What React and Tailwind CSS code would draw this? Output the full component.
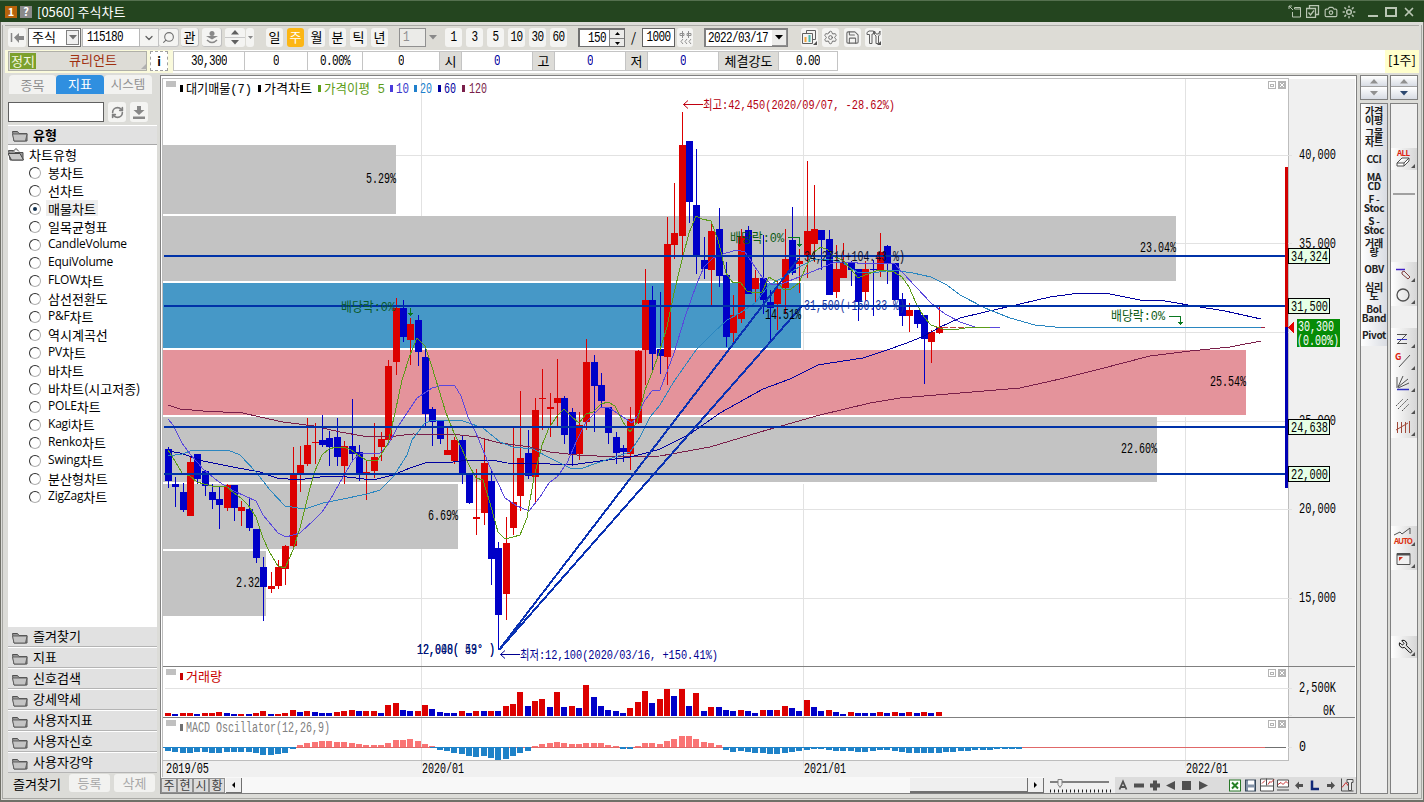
import React from 'react';
import { Search, RefreshCw, Settings, Save, Camera, Wrench, Sun, ChevronDown, X } from 'lucide-react';

const RED = '#dc0000';
const BLUE = '#0000c8';
const STEP = 7.34;

// high, body top, body bottom, low, direction
const candles = [
  [447, 449, 481, 488, 'B'], [477, 484, 487, 507, 'B'], [483, 492, 510, 512, 'B'], [456, 462, 516, 516, 'R'],
  [454, 454, 479, 484, 'B'], [470, 471, 486, 496, 'B'], [484, 492, 500, 509, 'B'], [487, 499, 505, 529, 'B'],
  [484, 485, 508, 511, 'R'], [485, 485, 508, 521, 'B'], [501, 507, 511, 526, 'R'], [499, 509, 528, 531, 'B'],
  [529, 529, 558, 563, 'B'], [557, 567, 587, 621, 'B'], [572, 586, 589, 593, 'R'], [560, 567, 586, 589, 'R'],
  [545, 546, 569, 585, 'R'], [447, 474, 546, 548, 'R'], [446, 465, 474, 492, 'R'], [418, 445, 464, 466, 'R'],
  [423, 442, 443, 464, 'R'], [415, 440, 445, 447, 'B'], [431, 438, 447, 466, 'B'], [418, 437, 457, 466, 'B'],
  [441, 446, 466, 484, 'R'], [399, 446, 454, 461, 'B'], [445, 452, 473, 481, 'B'], [460, 472, 473, 500, 'R'],
  [423, 457, 471, 478, 'R'], [432, 439, 447, 461, 'R'], [360, 366, 440, 444, 'R'], [298, 308, 362, 375, 'R'],
  [300, 308, 337, 342, 'B'], [318, 324, 340, 365, 'R'], [315, 320, 352, 366, 'B'], [348, 357, 414, 426, 'B'],
  [407, 409, 422, 446, 'B'], [420, 421, 439, 444, 'B'], [427, 450, 455, 455, 'R'], [437, 440, 461, 464, 'R'],
  [436, 440, 474, 484, 'B'], [474, 475, 503, 504, 'B'], [469, 517, 519, 535, 'R'], [438, 463, 513, 525, 'R'],
  [470, 481, 559, 585, 'B'], [542, 548, 615, 650, 'B'], [517, 543, 594, 620, 'R'], [427, 502, 528, 535, 'R'],
  [391, 458, 496, 511, 'R'], [430, 453, 476, 479, 'B'], [398, 410, 477, 502, 'R'], [369, 398, 399, 430, 'R'],
  [393, 407, 409, 437, 'R'], [359, 398, 403, 426, 'R'], [396, 398, 435, 444, 'B'], [408, 412, 454, 466, 'B'],
  [412, 425, 454, 460, 'R'], [339, 362, 422, 430, 'R'], [355, 362, 386, 432, 'B'], [373, 385, 401, 407, 'B'],
  [407, 407, 433, 444, 'B'], [432, 437, 453, 464, 'B'], [445, 448, 452, 462, 'B'], [407, 419, 454, 470, 'R'],
  [350, 351, 423, 424, 'R'], [269, 300, 350, 385, 'R'], [286, 300, 354, 370, 'B'], [292, 349, 356, 374, 'B'],
  [217, 244, 357, 385, 'R'], [183, 233, 245, 259, 'R'], [112, 145, 236, 255, 'R'], [141, 141, 202, 223, 'B'],
  [149, 205, 257, 274, 'B'], [237, 260, 269, 279, 'B'], [223, 231, 270, 305, 'R'], [208, 229, 276, 287, 'B'],
  [262, 275, 337, 347, 'B'], [295, 315, 333, 342, 'R'], [229, 236, 319, 323, 'R'], [226, 230, 294, 294, 'B'],
  [270, 278, 289, 302, 'R'], [235, 278, 300, 314, 'B'], [290, 302, 308, 340, 'B'], [281, 289, 304, 330, 'R'],
  [229, 259, 288, 314, 'R'], [207, 240, 273, 275, 'B'], [249, 261, 264, 293, 'R'], [161, 231, 257, 278, 'R'],
  [185, 229, 244, 262, 'R'], [230, 230, 240, 270, 'B'], [230, 239, 295, 295, 'B'], [245, 269, 292, 298, 'R'],
  [243, 262, 278, 278, 'R'], [261, 262, 270, 286, 'B'], [269, 269, 302, 321, 'B'], [261, 269, 292, 301, 'R'],
  [260, 269, 270, 316, 'B'], [233, 252, 270, 277, 'R'], [245, 246, 264, 284, 'B'], [263, 263, 300, 300, 'B'],
  [293, 299, 316, 326, 'B'], [303, 310, 316, 332, 'R'], [310, 310, 324, 328, 'B'], [315, 315, 339, 384, 'B'],
  [330, 332, 342, 363, 'R'], [305, 327, 333, 334, 'R'],
];

const volumes = [
  3, 2, 3, 3, 2, 3, 3, 4, 3, 2, 2, 2, 3, 5, 2, 2, 3, 6, 4, 5, 4, 3, 3, 4, 5, 6, 5, 5, 5, 3, 11, 13, 6, 5, 5, 11, 7, 4,
  3, 3, 5, 3, 5, 5, 5, 5, 10, 12, 24, 10, 15, 17, 9, 24, 9, 10, 8, 31, 19, 10, 6, 5, 3, 8, 14, 25, 13, 17, 27, 20, 27,
  10, 23, 5, 9, 9, 6, 5, 6, 5, 3, 6, 6, 6, 10, 8, 5, 16, 9, 5, 6, 4, 2, 4, 3, 3, 3, 4, 3, 4, 3, 4, 3, 4, 3, 4,
];
const volumeDir =
  'RBRRBRRRBBRBRRBRRRBRBBBRRRBRRBRRBBRRBBBBRBRBRBRRRBRRBRBRBRBBBBBRRRBRRBRBRBRBBBRBBRBRRBBRBBRBBRBBBRBRBRBRBR';

const macd = [
  -3, -4, -5, -5, -4, -4, -5, -5, -4, -4, -4, -4, -5, -7, -7, -6, -5, -1, 2, 4, 5, 6, 6, 5, 5, 4, 3, 2, 2, 2, 4, 7, 7, 8,
  6, 3, 1, -2, -3, -5, -6, -8, -9, -8, -10, -12, -11, -8, -5, -3, 1, 3, 4, 5, 4, 3, 3, 4, 4, 4, 2, 1, -1, -1, 1, 4, 4, 3,
  6, 8, 11, 11, 8, 5, 4, 2, -2, -4, -3, -4, -5, -5, -6, -6, -5, -4, -3, -2, -1, -1, -2, -3, -3, -3, -4, -4, -3, -2, -2,
  -3, -4, -5, -5, -5, -5, -5, -4, -4, -3, -3, -2, -2, -2, -1, -1, -1, -1,
];

const bands = [
  [145, 69, 396, '#c3c3c3'],
  [216, 65, 1176, '#c3c3c3'],
  [283, 65, 801, '#4698c7'],
  [350, 65, 1246, '#e4939b'],
  [417, 65, 1157, '#c3c3c3'],
  [484, 65, 458, '#c3c3c3'],
  [551, 65, 266, '#c3c3c3'],
];

const averages = [
  ['#7a1f4a', '168,405 180,409 203,411 243,413 260,417 283,422 314,426 340,432 363,436 387,437 413,434 460,435 477,437 500,443 530,447 550,452 577,455 617,457 660,456 710,447 760,432 820,415 870,403 900,398 960,393 1020,388 1060,379 1100,369 1150,356 1190,351 1230,347 1261,341'],
  ['#0000a0', '168,451 180,453 203,461 233,467 260,472 277,478 298,480 327,476 347,477 373,480 393,475 410,468 425,463 453,462 470,460 492,460 507,463 550,464 570,465 593,462 630,457 650,452 660,449 690,434 720,413 763,389 790,379 818,365 843,361 863,358 887,350 907,343 924,336 940,327 960,318 985,312 1020,304 1050,297 1080,293 1110,294 1140,300 1165,301 1200,307 1225,311 1261,319'],
  ['#2a86c0', '168,456 182,454 193,450 228,450 240,455 256,472 270,490 285,506 305,509 323,503 343,499 367,494 380,490 393,477 407,455 412,440 425,423 433,420 463,421 483,428 500,442 513,447 533,449 550,458 570,468 580,469 600,462 630,452 640,437 650,417 660,405 673,383 682,370 696,350 713,333 727,320 740,313 755,303 769,285 784,277 799,267 813,260 830,259 843,263 857,272 872,273 893,270 913,273 931,277 947,285 960,295 985,308 1010,318 1035,325 1065,328 1262,327'],
  ['#5a48dc', '168,419 173,425 182,443 190,454 204,470 219,482 234,491 256,501 263,515 278,533 286,537 300,533 314,520 322,512 330,500 343,477 353,460 360,454 380,453 388,445 397,428 407,413 417,398 432,388 443,385 455,386 461,396 468,417 476,433 490,467 498,483 505,498 517,506 529,511 540,497 549,483 557,477 567,463 577,440 586,422 601,407 608,407 623,417 632,423 638,415 645,400 652,391 660,390 665,377 674,353 685,317 697,283 704,267 713,258 726,253 737,250 745,252 755,267 762,277 773,285 784,283 799,277 821,268 835,262 850,262 865,264 894,263 902,272 916,287 931,303 945,314 960,322 975,327 1000,328'],
  ['#5c9c18', '168,450 175,461 182,473 190,476 197,482 204,484 212,486 227,487 234,493 241,498 248,505 256,517 263,538 270,553 278,566 285,568 293,550 300,528 307,500 314,473 322,455 329,449 336,447 344,447 351,450 358,455 366,460 378,460 388,443 395,413 402,380 410,355 417,338 425,346 432,367 439,390 446,413 454,433 461,447 468,463 476,478 483,480 490,503 498,532 505,539 513,537 520,535 527,518 534,477 542,445 549,428 557,416 564,409 572,417 579,423 586,414 593,412 601,404 608,402 615,406 623,422 630,432 637,422 645,390 652,373 659,353 667,327 674,293 682,260 689,233 696,216 702,219 711,221 718,240 726,273 733,283 740,282 747,291 755,293 762,292 769,277 777,282 784,290 791,289 799,283 806,267 813,253 821,247 828,250 835,257 843,260 850,268 858,278 865,275 879,270 894,272 902,277 909,287 916,303 924,317 931,325 943,329 953,330 965,328 990,327'],
];

const chartTypes = [
  '봉차트', '선차트', '매물차트', '일목균형표', 'CandleVolume', 'EquiVolume', 'FLOW차트', '삼선전환도', 'P&F차트',
  '역시계곡선', 'PV차트', '바차트', '바차트(시고저종)', 'POLE차트', 'Kagi차트', 'Renko차트', 'Swing차트', '분산형차트', 'ZigZag차트',
];

const folders = ['즐겨찾기', '지표', '신호검색', '강세약세', '사용자지표', '사용자신호', '사용자강약'];

const shortcuts = [
  ['가격', '이평'], ['그물', '차트'], ['CCI'], ['MA', 'CD'], ['F -', 'Stoc'], ['S -', 'Stoc'], ['거래', '량'], ['OBV'],
  ['심리', '도'], ['Bol', 'Band'], ['Pivot'],
];

// text stretched to a fixed width; y is the vertical centre of the line
function Label({ x, y, w, fill = '#000', children }) {
  const korean = /[가-힣]/.test(children);
  return (
    <text
      x={x} y={y + (korean ? 4.5 : 5)} fill={fill} fontSize={korean ? 13 : 14}
      textLength={w} lengthAdjust="spacingAndGlyphs" style={{ whiteSpace: 'pre' }}
    >
      {children}
    </text>
  );
}

function PaneButtons({ y }) {
  return (
    <g fill="none" stroke="#b4b4b4">
      <rect x="1268.5" y={y + 0.5} width="7" height="7" />
      <rect x="1270.5" y={y + 3.5} width="3" height="2" />
      <rect x="1278.5" y={y + 0.5} width="7" height="7" fill="#b4b4b4" />
      <path d={`M1280 ${y + 2}l4 4m0 -4l-4 4`} stroke="#fff" />
    </g>
  );
}

function PriceTag({ y, children }) {
  return (
    <g>
      <rect x="1288.5" y={y - 7.5} width="41" height="15" fill="#e6ffe6" stroke="#000" />
      <Label x={1291} y={y} w={37}>{children}</Label>
    </g>
  );
}

function Chart() {
  return (
    <svg
      width="1195" height="700" viewBox="161 77 1195 700"
      className="block shrink-0 font-['Liberation_Mono','Noto_Sans_CJK_KR',monospace]"
      shapeRendering="crispEdges"
    >
      <rect x="161" y="77" width="1195" height="700" fill="#fff" />
      <rect x="1289" y="79" width="66" height="698" fill="#f0f0f0" />
      <rect x="163" y="761" width="1192" height="16" fill="#f0f0f0" />
      <path d="M163 78.5H1289M1288.5 78V761M162.5 78V777" stroke="#bdbdbd" />

      {bands.map(([y, h, right, fill]) => (
        <rect key={y} x="163" y={y} width={right - 163} height={h} fill={fill} />
      ))}
      <path d="M396 155.5H1292M1176 243.5H1292M801 332.5H1292M1157 421.5H1292M458 509.5H1292M266 598.5H1292M165 688.5H1292M1288 715.5H1292M1288 747.5H1292" stroke="#e2e2e2" />
      <path d="M421.5 79V216M421.5 549V768M803.5 79V216M803.5 283V350M803.5 484V768M1185.5 79V350M1185.5 417V768" stroke="#e2e2e2" />

      {candles.map(([high, top, bottom, low, dir], i) => {
        const x = Math.round(168 + i * STEP);
        const fill = dir === 'R' ? RED : BLUE;
        return (
          <g key={i} fill={fill}>
            <rect x={x} y={high} width="1" height={low - high} />
            <rect x={x - 3} y={top} width="7" height={bottom - top} />
          </g>
        );
      })}

      {averages.map(([stroke, points]) => (
        <polyline key={stroke} points={points} fill="none" stroke={stroke} />
      ))}
      <path d="M942 327.5H966" stroke="#c04040" strokeDasharray="6 2" />
      <path d="M1261 327.5H1265" stroke="#a02040" />

      <path d="M164 256H1286M164 306H1286M164 427H1286M164 474H1286" stroke="#0032a8" strokeWidth="2" />
      <path d="M499 650L799 258M499 650L801 307" stroke="#0a32b4" strokeWidth="2" fill="none" />

      <rect x="1285" y="167" width="3" height="160" fill="#d20000" />
      <rect x="1285" y="327" width="3" height="161" fill="#0000b4" />

      <Label x={366} y={178} w={30}>5.29%</Label>
      <Label x={1140} y={247} w={36}>23.04%</Label>
      <Label x={765} y={314} w={36}>14.51%</Label>
      <Label x={1210} y={381} w={36}>25.54%</Label>
      <Label x={1121} y={448} w={36}>22.60%</Label>
      <Label x={428} y={515} w={30}>6.69%</Label>
      <Label x={236} y={582} w={24}>2.32</Label>

      <Label x={804} y={256} w={101} fill="#101028">34,271(+104.43 %)</Label>
      <Label x={804} y={305} w={101} fill="#1432a0">31,500(+160.33 %)</Label>
      <Label x={341} y={306} w={54} fill="#0a5a28">배당락:0%</Label>
      <Label x={730} y={237} w={54} fill="#0a5a14">배당락:0%</Label>
      <Label x={1111} y={315} w={54} fill="#0a5a14">배당락:0%</Label>
      <g stroke="#0a7820" fill="none">
        <path d="M410.5 308V316M408 313.5H413M409 314.5H412" />
        <path d="M788 237.5H799.5V247M797 244.5H802M798 245.5H801" />
        <path d="M1169 316.5H1180.5V325M1178 322.5H1183M1179 323.5H1182" />
      </g>

      <g fill="none" shapeRendering="auto">
        <path d="M703 104.5H683.5M688 100.5L683.5 104.5L688 108.5" stroke="#c00010" />
        <path d="M520 654.5H500.5M505 650.5L500.5 654.5L505 658.5" stroke="#000090" />
      </g>
      <Label x={703} y={104} w={192} fill="#b40010">최고:42,450(2020/09/07, -28.62%)</Label>
      <Label x={520} y={654} w={198} fill="#000090">최저:12,100(2020/03/16, +150.41%)</Label>
      <Label x={417} y={649} w={78} fill="#001478">12,000( 53° )</Label>
      <Label x={417} y={649} w={78} fill="#001478">12,048( 49° )</Label>

      <g fill="#c0c0c0">
        <rect x="166" y="81" width="10" height="6" />
        <rect x="166" y="669" width="10" height="6" />
        <rect x="166" y="720" width="10" height="6" />
      </g>
      <rect x="180" y="85" width="3" height="7" fill="#000" />
      <Label x={186} y={88} w={66}>대기매물(7)</Label>
      <rect x="258" y="85" width="3" height="7" fill="#000" />
      <Label x={264} y={88} w={48}>가격차트</Label>
      <rect x="318" y="85" width="3" height="7" fill="#5c9c18" />
      <Label x={324} y={88} w={61} fill="#5c9c18">가격이평 5</Label>
      <rect x="390" y="85" width="3" height="7" fill="#4a3cdc" />
      <Label x={396} y={88} w={13} fill="#3c3ccc">10</Label>
      <rect x="414" y="85" width="3" height="7" fill="#2080cc" />
      <Label x={420} y={88} w={12} fill="#2080cc">20</Label>
      <rect x="438" y="85" width="3" height="7" fill="#0000a0" />
      <Label x={444} y={88} w={12} fill="#0000a0">60</Label>
      <rect x="462" y="85" width="3" height="7" fill="#7a1f4a" />
      <Label x={469} y={88} w={18} fill="#7a1f4a">120</Label>

      <path d="M163 666.5H1355M163 717.5H1355" stroke="#808080" />
      <path d="M163 760.5H1289" stroke="#bdbdbd" />
      <rect x="180" y="673" width="3" height="7" fill="#c80000" />
      <Label x={186} y={676} w={36} fill="#c80000">거래량</Label>
      <rect x="180" y="724" width="3" height="7" fill="#707070" />
      <Label x={186} y={727} w={144} fill="#808080">MACD Oscillator(12,26,9)</Label>

      {volumes.map((v, i) => (
        <rect key={i} x={Math.round(168 + i * STEP) - 3} y={716 - v} width="6" height={v} fill={volumeDir[i] === 'R' ? RED : BLUE} />
      ))}
      <path d="M163 747.5H858" stroke="#e06868" />
      <path d="M1022 747.5H1265" stroke="#e06868" />
      <path d="M163 747.5H290M430 747.5H505M725 747.5H1022" stroke="#1e82c8" />
      <path d="M1265 747.5H1286" stroke="#707070" />
      {macd.map((v, i) => (
        <rect
          key={i} x={Math.round(168 + i * STEP) - 3} y={v > 0 ? 747 - v : 747} width="6"
          height={v > 0 ? v : -v + 1} fill={v > 0 ? '#fa7474' : '#1e82c8'}
        />
      ))}

      <Label x={1299} y={154} w={37}>40,000</Label>
      <Label x={1299} y={243} w={37}>35,000</Label>
      <Label x={1299} y={420} w={37}>25,000</Label>
      <Label x={1299} y={508} w={37}>20,000</Label>
      <Label x={1299} y={597} w={37}>15,000</Label>
      <Label x={1299} y={687} w={37}>2,500K</Label>
      <Label x={1323} y={710} w={12}>0K</Label>
      <Label x={1299} y={746} w={7}>0</Label>
      <PriceTag y={256}>34,324</PriceTag>
      <PriceTag y={306}>31,500</PriceTag>
      <PriceTag y={427}>24,638</PriceTag>
      <PriceTag y={474}>22,000</PriceTag>
      <rect x="1297" y="319" width="43" height="28" fill="#078c07" />
      <Label x={1298} y={326} w={36} fill="#fff">30,300</Label>
      <Label x={1297} y={340} w={42} fill="#fff">(0.00%)</Label>
      <path d="M1288 327.5L1294 322V333Z" fill="#e60000" />

      <Label x={166} y={768} w={43}>2019/05</Label>
      <Label x={422} y={768} w={42}>2020/01</Label>
      <Label x={804} y={768} w={42}>2021/01</Label>
      <Label x={1186} y={768} w={42}>2022/01</Label>
      <PaneButtons y={81} />
      <PaneButtons y={669} />
      <PaneButtons y={720} />
    </svg>
  );
}

function TitleBar() {
  return (
    <header className="flex h-[22px] shrink-0 items-center border-t border-[#55704f] bg-[#24451f] pl-[5px] pr-[8px] text-white">
      <span className="flex h-[12px] w-[12px] items-center justify-center bg-[#b8640c] text-[11px] font-bold">1</span>
      <span className="ml-[3px] flex h-[12px] w-[12px] items-center justify-center bg-[#8a8a8a] text-[11px] font-bold">?</span>
      <span className="ml-[5px] pb-px whitespace-nowrap text-[13px] leading-none">[0560] 주식차트</span>
      <div className="ml-auto flex items-center text-[#b9c6b4]">
        <svg width="14" height="13" viewBox="0 0 14 13" fill="none" stroke="currentColor">
          <path d="M1 1l4 4M1 4V1h3M4.500 7v5h8V4h-6M6.500 4V2.500h6V5" />
        </svg>
        <svg className="ml-[4px]" width="14" height="13" viewBox="0 0 14 13" fill="none" stroke="currentColor">
          <path d="M3.500 3V.5h9v9H10M.5 3.500h9v9h-9zM2.500 7.500l2 2.500L8 5.500" strokeWidth="1.300" />
        </svg>
        <Camera className="ml-[4px]" size={14} strokeWidth={2} />
        <Sun className="ml-[4px]" size={14} strokeWidth={2.500} />
        <span className="ml-[12px] mt-[8px] h-[2px] w-[10px] bg-[#b9c6b4]" />
        <span className="ml-[7px] h-[10px] w-[12px] border-2 border-[#b9c6b4]" />
        <X className="ml-[5px]" size={14} strokeWidth={3} />
      </div>
    </header>
  );
}

function ToolButton({ className = '', children }) {
  return (
    <div className={`flex h-[19px] shrink-0 items-center justify-center rounded-[3px] bg-[#f4f4f2] ${className}`}>{children}</div>
  );
}

const Digits = ({ children, className = '' }) => (
  <span className={`inline-block origin-center scale-y-130 whitespace-pre font-['Liberation_Mono',monospace] text-[11px] tracking-[-0.6px] ${className}`}>{children}</span>
);

const Down = ({ fill = '#707070' }) => (
  <svg width="8" height="5" viewBox="0 0 8 5"><path d="M0 0h8L4 4.500z" fill={fill} /></svg>
);

const Up = ({ fill = '#707070' }) => (
  <svg width="8" height="5" viewBox="0 0 8 5"><path d="M0 4.500h8L4 0z" fill={fill} /></svg>
);

function Toolbar() {
  return (
    <div className="flex h-[25px] shrink-0 items-center border-t border-[#aaaaa6] bg-[#dddcd6] pb-px pl-[3px] text-[13px] leading-none">
      <ToolButton className="w-[18px]">
        <svg width="15" height="11" viewBox="0 0 15 11"><path d="M1.500 1v9" stroke="#888" strokeWidth="1.500" /><path d="M4 5.500L9 1v3h5v4H9v3z" fill="#888" /></svg>
      </ToolButton>
      <div className="ml-[2px] flex h-[19px] w-[53px] items-center border border-[#707070] bg-white pl-[3px]">
        <span className="pb-[2px]">주식</span>
        <span className="ml-auto mr-[1px] flex h-[15px] w-[13px] items-center justify-center border border-[#808080] bg-[#f0f0f0]"><Down /></span>
      </div>
      <div className="ml-[1px] flex h-[19px] w-[58px] items-center border border-[#b8b8b8] bg-white pl-[4px]"><Digits>115180</Digits></div>
      <ToolButton className="w-[19px] !rounded-none border-y border-r border-[#c4c4c4] text-[#606060]"><ChevronDown size={12} strokeWidth={2.500} /></ToolButton>
      <ToolButton className="w-[20px] border-y border-r border-[#c4c4c4] text-[#707070]"><Search size={13} className="-scale-x-100" /></ToolButton>
      <ToolButton className="ml-[2px] w-[18px] border-b border-r border-[#c0c0c0] pb-px">관</ToolButton>
      <ToolButton className="ml-[3px] w-[20px] border-b border-r border-[#c0c0c0]">
        <svg width="14" height="14" viewBox="0 0 14 14"><circle cx="7" cy="3.500" r="2.500" fill="#888" /><path d="M1 6h12L7 9.500z" fill="#888" /><path d="M2 10q5 5 10 0" fill="none" stroke="#888" strokeWidth="1.500" /></svg>
      </ToolButton>
      <ToolButton className="ml-[3px] w-[20px] flex-col gap-[1px]">
        <Up fill="#606060" /><span className="my-px h-px w-full bg-[#c8c8c8]" /><Down fill="#606060" />
      </ToolButton>
      <ToolButton className="ml-[1px] w-[8px]"><svg width="5" height="3"><path d="M0 0h5L2.500 3z" fill="#888" /></svg></ToolButton>
      <ToolButton className="ml-[12px] w-[17px] pb-[2px]">일</ToolButton>
      <ToolButton className="ml-[4px] w-[17px] !bg-[#fcb614] pb-[2px] text-white">주</ToolButton>
      <ToolButton className="ml-[4px] w-[17px] pb-[2px]">월</ToolButton>
      <ToolButton className="ml-[4px] w-[17px] pb-[2px]">분</ToolButton>
      <ToolButton className="ml-[4px] w-[17px] pb-[2px]">틱</ToolButton>
      <ToolButton className="ml-[4px] w-[17px] pb-[2px]">년</ToolButton>
      <div className="ml-[11px] flex h-[19px] w-[27px] items-center border border-[#909090] bg-[#ebebe8] pl-[3px] text-[#909090]"><Digits>1</Digits></div>
      <span className="ml-[3px] w-[8px]"><Down fill="#888" /></span>
      <ToolButton className="ml-[8px] w-[17px]"><Digits>1</Digits></ToolButton>
      <ToolButton className="ml-[4px] w-[17px]"><Digits>3</Digits></ToolButton>
      <ToolButton className="ml-[4px] w-[17px]"><Digits>5</Digits></ToolButton>
      <ToolButton className="ml-[4px] w-[17px]"><Digits>10</Digits></ToolButton>
      <ToolButton className="ml-[4px] w-[17px]"><Digits>30</Digits></ToolButton>
      <ToolButton className="ml-[4px] w-[17px]"><Digits>60</Digits></ToolButton>
      <div className="ml-[11px] flex h-[19px] w-[47px] items-center border-2 border-b border-r border-[#707070] bg-white pl-[8px]">
        <Digits>150</Digits>
        <span className="ml-auto flex h-[16px] w-[15px] flex-col items-center justify-around border-l border-[#808080] bg-[#ececea]">
          <svg width="5" height="3"><path d="M0 3h5L2.500 0z" fill="#000" /></svg>
          <span className="h-px w-full bg-[#808080]" />
          <svg width="5" height="3"><path d="M0 0h5L2.500 3z" fill="#000" /></svg>
        </span>
      </div>
      <span className="ml-[6px] w-[6px] pb-[2px]">/</span>
      <div className="ml-[5px] flex h-[19px] w-[33px] items-center justify-center border border-[#606060] bg-white"><Digits>1000</Digits></div>
      <ToolButton className="ml-[2px] w-[16px]">
        <svg width="13" height="14" viewBox="0 0 13 14" fill="none" stroke="#909090"><path d="M3.500 0v7M1 2.500h4v2H1zM9.500 0v7M8 2.500h4v2H8zM4 8l-2 2.500L4 13M8 8l-2 2.500L8 13M12 8l-2 2.500 2 2.500" /></svg>
      </ToolButton>
      <div className="ml-[11px] flex h-[19px] w-[84px] items-center border-2 border-b border-r border-[#808080] bg-white pl-[2px]">
        <Digits>2022/03/17</Digits>
        <span className="ml-auto flex h-[16px] w-[15px] items-center justify-center border-b border-r border-[#909090] bg-[#ececea]"><Down fill="#000" /></span>
      </div>
      <ToolButton className="ml-[13px] w-[17px]">
        <svg width="15" height="15" viewBox="0 0 15 15" fill="none" stroke="#606060"><path d="M4.500 3V.5h9v9H11M.5 3.500h10v10H.5z" /><path d="M3.500 12V7" stroke="#eea23c" strokeWidth="2" /><path d="M7.500 12V5" stroke="#4cb8b0" strokeWidth="2" /><path d="M15 11v4h-4z" fill="#505050" stroke="none" /></svg>
      </ToolButton>
      <ToolButton className="ml-[4px] w-[17px] text-[#686868]"><Settings size={15} strokeWidth={1.500} /></ToolButton>
      <ToolButton className="ml-[5px] w-[17px] text-[#686868]"><Save size={15} strokeWidth={1.700} /></ToolButton>
      <ToolButton className="ml-[4px] w-[17px]">
        <svg width="15" height="15" viewBox="0 0 15 15" fill="none" stroke="#606060"><path d="M1 4.500V2.500L3 1h4.500v3H6v9.500H3.500V4.500zM8.500 1v3.500l1.500 1.500v7.500h2.500V6L14 4.500V1l-1.500 3H10z" /><path d="M15 11v4h-4z" fill="#505050" stroke="none" /></svg>
      </ToolButton>
    </div>
  );
}

function Cell({ className, children }) {
  return <div className={`flex h-[20px] items-center justify-center border-y border-r border-[#c4c4c4] bg-white ${className}`}>{children}</div>;
}

function QuoteRow() {
  return (
    <div className="flex h-[23px] shrink-0 items-start bg-white text-[13px] leading-none">
      <div className="flex h-[23px] w-[168px] items-start bg-[#fafadc] pl-[3px] pt-px">
        <div className="flex h-[20px] w-[139px] items-center border border-[#b0b0a8] bg-[#dddcd6] pl-px">
          <span className="flex h-[16px] w-[26px] items-center justify-center bg-[#7ca02c] pb-[2px] text-[#f4f8e0]">정지</span>
          <span className="ml-[33px] pb-[3px] text-[#a03010]">큐리언트</span>
          <svg className="ml-auto mt-[10px]" width="5" height="5"><path d="M5 0v5H0z" fill="#b0b0b0" /></svg>
        </div>
        <div className="ml-[3px] flex h-[20px] w-[18px] items-center justify-center border border-dashed border-[#a0a0a0] bg-white text-[12px] font-bold">i</div>
      </div>
      <div className="mt-px flex">
        <Cell className="w-[72px] border-l"><Digits>30,300</Digits></Cell>
        <Cell className="w-[63px]"><Digits>0</Digits></Cell>
        <Cell className="w-[55px]"><Digits>0.00%</Digits></Cell>
        <Cell className="w-[77px]"><Digits>0</Digits></Cell>
        <Cell className="w-[22px] !bg-[#dddcd8] pb-px">시</Cell>
        <Cell className="w-[71px] text-[#0000a0]"><Digits>0</Digits></Cell>
        <Cell className="w-[22px] !bg-[#dddcd8] pb-px">고</Cell>
        <Cell className="w-[71px] text-[#0000a0]"><Digits>0</Digits></Cell>
        <Cell className="w-[22px] !bg-[#dddcd8] pb-px">저</Cell>
        <Cell className="w-[71px] text-[#0000a0]"><Digits>0</Digits></Cell>
        <Cell className="w-[60px] !bg-[#dddcd8] pb-px">체결강도</Cell>
        <Cell className="w-[59px]"><Digits>0.00</Digits></Cell>
      </div>
      <div className="ml-auto flex h-[23px] w-[34px] justify-center bg-[#ffffcc] pt-[3px]">[1주]</div>
    </div>
  );
}

function Folder({ open }) {
  return (
    <svg width="16" height="13" viewBox="0 0 16 13">
      <path d="M.5 2.500h5l1.500 2h8V12H2z" fill="#989898" stroke="#505050" />
      {open ? <path d="M0 5.500h12l3.500 6.500H3.500z" fill="#c8c8c8" stroke="#484848" /> : <path d="M.5 5h14.500L13.500 12H2z" fill="#c4c4c4" stroke="#606060" />}
      {open && <path d="M5 3.500L8 .5l3 3" fill="#eee" stroke="#505050" />}
    </svg>
  );
}

function TypeName({ name }) {
  const [, latin, rest] = name.match(/^([A-Za-z&]*)(.*)$/);
  return (
    <>
      {latin && <span className="font-['Open_Sans',sans-serif] text-[12px] tracking-[-0.2px]">{latin}</span>}
      {rest}
    </>
  );
}

function Sidebar() {
  return (
    <aside className="flex w-[149px] shrink-0 flex-col text-[13px] leading-none">
      <div className="flex h-[19px] pl-[1px] text-[#909090]">
        <div className="flex w-[47px] items-center justify-center rounded-t-[4px] bg-[#f2f2f0] pb-px">종목</div>
        <div className="flex w-[48px] items-center justify-center rounded-t-[4px] bg-[#2f8fe0] pb-[3px] text-white">지표</div>
        <div className="flex w-[48px] items-center justify-center rounded-t-[4px] bg-[#f2f2f0] pb-px text-[12.500px]">시스템</div>
      </div>
      <div className="mt-[8px] flex h-[20px]">
        <div className="w-[96px] border border-[#606060] bg-white" />
        <div className="ml-[4px] flex w-[18px] items-center justify-center rounded-[3px] bg-[#f4f4f2] text-[#808080]"><RefreshCw size={13} strokeWidth={3} /></div>
        <div className="ml-[4px] flex w-[18px] items-center justify-center rounded-[3px] bg-[#f4f4f2]">
          <svg width="12" height="13" viewBox="0 0 12 13"><path d="M4 0h4v4h3.500L6 9 .5 4H4zM0 10.500h12V13H0z" fill="#888" /></svg>
        </div>
      </div>
      <div className="mt-[3px] flex h-[20px] items-center border-b border-t border-b-[#a8a8a8] border-t-white bg-[#e1e1e1] pl-[4px] font-bold">
        <Folder /><span className="ml-[5px] pb-px">유형</span>
      </div>
      <div className="h-[481px] bg-white">
        <div className="flex h-[18px] items-center"><Folder open /><span className="ml-[5px]">차트유형</span></div>
        {chartTypes.map((name) => {
          const active = name === '매물차트';
          return (
            <div key={name} className="flex h-[18px] items-center pl-[21px]">
              <span className="mt-px flex h-[12px] w-[12px] items-center justify-center rounded-full border border-b-[#b0b0b0] border-l-[#303030] border-r-[#b0b0b0] border-t-[#303030]">
                {active && <span className="h-[4px] w-[4px] rounded-full bg-[#103050]" />}
              </span>
              <span className={`ml-[5px] flex h-[16px] items-center whitespace-nowrap px-[2px] ${active ? 'bg-[#eeeeee]' : ''}`}><TypeName name={name} /></span>
            </div>
          );
        })}
      </div>
      {folders.map((name) => (
        <div key={name} className="flex h-[21px] items-center border-b border-t border-b-[#b4b4b4] border-t-white bg-[#e1e1e1] pb-[3px] pl-[4px]">
          <span className="mt-[4px]"><Folder /></span><span className="ml-[5px]">{name}</span>
        </div>
      ))}
      <div className="mt-[1px] flex h-[18px] items-center pl-[5px]">
        <span className="w-[47px] whitespace-nowrap">즐겨찾기</span>
        <span className="ml-[9px] flex h-[18px] w-[41px] items-center justify-center rounded-[3px] bg-[#f2f2f0] pb-px text-[#a8a8a8]">등록</span>
        <span className="ml-[4px] flex h-[18px] w-[41px] items-center justify-center rounded-[3px] bg-[#f2f2f0] pb-px text-[#a8a8a8]">삭제</span>
      </div>
    </aside>
  );
}

function ScrollBar() {
  return (
    <div className="flex h-[16px] items-center bg-[#f8f8f8] text-[12px] leading-none">
      {['주', '현', '시', '황'].map((c) => (
        <span key={c} className="flex h-[15px] w-[16px] items-center justify-center border border-[#909090] bg-[#dcdcdc] text-[#404040]">{c}</span>
      ))}
      <span className="ml-[1px] flex h-[15px] w-[16px] items-center justify-center border-b border-r border-[#707070] bg-[#f0f0f0]">
        <svg width="3" height="6"><path d="M3 0v6L0 3z" /></svg>
      </span>
      <span className="ml-[668px] h-[15px] w-[118px] border-b-2 border-r border-[#707070] bg-[#efefef]" />
      <span className="flex h-[15px] w-[16px] items-center justify-center border-b border-r border-[#707070] bg-[#f0f0f0]">
        <svg width="3" height="6"><path d="M0 0v6l3-3z" /></svg>
      </span>
      <div className="flex h-[16px] flex-1 items-center bg-[#dcdcdc]">
        <svg width="311" height="16" viewBox="1044 777.5 311 16" fill="none">
          <rect x="1044" y="777" width="71" height="17" fill="#f0f0f0" />
          <path d="M1050 782.500H1109" stroke="#808080" strokeWidth="2" />
          <path d="M1058 780h4v5l-2 3-2-3z" fill="#f0f0f0" stroke="#808080" />
          <path d="M1050 791.500H1111" stroke="#202020" strokeWidth="3" strokeDasharray="1 3" />
          <path d="M1119.500 790l3.500-8 3.500 8M1121 787.500h4" stroke="#505050" strokeWidth="1.800" />
          <path d="M1134 786h10" stroke="#505050" strokeWidth="4" />
          <path d="M1150 786h10M1155 781v10" stroke="#505050" strokeWidth="4" />
          <path d="M1175 781.500v9l-9-4.500zM1182 781.500h9v9h-9zM1199 781.500v9l9-4.500z" fill="#505050" />
          <rect x="1229.500" y="780.500" width="11" height="11" fill="#fff" stroke="#287828" />
          <path d="M1232 783l6 6M1238 783l-6 6" stroke="#288028" strokeWidth="2" />
          <rect x="1245.500" y="780.500" width="10" height="11" fill="#8494a8" stroke="#384858" />
          <path d="M1248 781h6v4h-6zM1248 788h6v3h-6z" fill="#fff" />
          <path d="M1260.500 779.500h13v12h-13zM1260.500 786.500h13M1266.500 779v7" fill="#fff" stroke="#505050" />
          <path d="M1262 784l3-3M1268 785l2-3 1 1 3-3" stroke="#c83030" />
          <path d="M1277.500 780.500h11v7h-11zM1277 790.500h12" fill="#fff" stroke="#505050" />
          <path d="M1278 785l3-2 2 2 3-3 2 2" stroke="#c83030" />
          <path d="M1295 786l4-4v2.500h4v3h-4v2.500zM1335 786l-4-4v2.500h-4v3h4v2.500z" fill="#505050" />
          <path d="M1312 781v8.500h7" stroke="#102878" strokeWidth="2.500" />
          <path d="M1341.500 779v12.500h12" stroke="#505050" />
          <path d="M1342 788l4-5 2 3 3-4" stroke="#c83030" />
          <path d="M1347 780h6v3h-1.500v8h-3v-8h-1.500z" fill="#e8e8e8" stroke="#505050" />
        </svg>
      </div>
    </div>
  );
}

function StripArrows({ active }) {
  return (
    <div className="border border-[#808080] bg-[#f0f0f0]">
      <div className="flex h-[11px] items-center justify-center border-b border-[#a0a0a0] bg-gradient-to-b from-white to-[#d8dce4]"><Up fill="#909090" /></div>
      <div className="flex h-[12px] items-center justify-center bg-gradient-to-b from-white to-[#d8dce4]"><Down fill={active ? '#2c4870' : '#909090'} /></div>
    </div>
  );
}

function Shortcuts() {
  return (
    <div className="flex w-[28px] shrink-0 flex-col">
      <StripArrows />
      <div className="mt-[3px] flex-1 border border-[#808080] bg-[#eeeeee]">
        {shortcuts.map((lines) => (
          <div key={lines.join('')} className="flex h-[22px] flex-col items-center justify-center bg-gradient-to-r from-white to-[#d9dce2] text-[10px] font-bold leading-[9.500px] tracking-[-0.3px] text-[#202020]">
            {lines.map((line) => <span key={line}>{line}</span>)}
          </div>
        ))}
      </div>
    </div>
  );
}

function DrawTool({ className = '', children }) {
  return (
    <div className={`h-[22px] bg-gradient-to-r from-white to-[#d6d6d6] ${className}`}>
      <svg width="26" height="22" viewBox="0 0 26 22" fill="none" stroke="#505050">
        {children}
        <path d="M24 16v4h-4z" fill="#505050" stroke="none" />
      </svg>
    </div>
  );
}

function DrawingTools() {
  return (
    <div className="flex w-[28px] shrink-0 flex-col">
      <StripArrows active />
      <div className="mt-[3px] flex-1 border border-[#808080] bg-[#f0f0f0]">
        <DrawTool className="mt-[44px]">
          <text x="6" y="8" fill="#dc2010" stroke="none" fontSize="8" fontWeight="bold" textLength="13">ALL</text>
          <path d="M6 15l5-5h7l-5 5zM6 15v3h7l5-5v-3M13 15v3" fill="#fff" />
        </DrawTool>
        <div className="mx-[2px] mt-[23px] h-[2px] bg-[#a0a0a0]" />
        <DrawTool className="mt-[67px]">
          <path d="M5 7.500h9" stroke="#4020c8" strokeWidth="1.500" />
          <path d="M11 10l2-1 6 6-2 2-6-5z" stroke="#804040" />
        </DrawTool>
        <DrawTool><circle cx="12" cy="11" r="6" strokeWidth="1.300" /></DrawTool>
        <DrawTool className="mt-[22px]"><path d="M6 6.500h10M6 15.500h10M15 7L7 15" /><path d="M6 11.500h10" stroke="#3030c0" /></DrawTool>
        <DrawTool>
          <text x="4" y="10" fill="#dc2010" stroke="none" fontSize="9" fontWeight="bold">G</text>
          <path d="M8 17L19 5" />
        </DrawTool>
        <DrawTool><path d="M6 16V5M7 15L12 4M7 15L17 7M7 16L18 11" /><path d="M6 17.500h12" stroke="#3030c0" strokeWidth="1.500" /></DrawTool>
        <DrawTool><path d="M5 12l7-7M7 15L17 5M11 17l7-7" strokeDasharray="2 1" /></DrawTool>
        <DrawTool><path d="M6.500 6v11M10.500 6v11M14.500 6v11M18.500 5v12" stroke="#a04838" /><path d="M5 14L17 7" stroke="#a04838" /></DrawTool>
        <DrawTool className="mt-[88px]">
          <path d="M3 9l6-3 2 2 8-6v6" />
          <text x="3" y="18" fill="#dc3010" stroke="none" fontSize="8" fontWeight="bold" textLength="19">AUTO</text>
        </DrawTool>
        <DrawTool><path d="M6 5.500h13v11H6z" fill="#f0f0f0" /><path d="M6 6.500h13" strokeWidth="2" /><path d="M8 9h4l-4 4z" fill="#d03020" stroke="none" /></DrawTool>
        <DrawTool className="mt-[66px]">
          <g transform="translate(22 3) scale(-1 1)"><Wrench size={15} strokeWidth={1.500} /></g>
        </DrawTool>
      </div>
    </div>
  );
}

export default function App() {
  return (
    <div className="flex h-[802px] w-[1424px] flex-col overflow-hidden bg-[#dcdcd8] font-['Noto_Sans_CJK_KR',sans-serif] text-black">
      <TitleBar />
      <div className="flex h-[780px] flex-col border-b-2 border-l border-r border-[#707068] px-[1px] pt-[3px]">
        <div className="flex h-[774px] shrink-0 flex-col border-x border-b border-[#a8a8a4] px-[2px]">
          <Toolbar />
          <QuoteRow />
          <main className="flex min-h-0 flex-1 pb-[4px] pl-[3px] pt-[2px]">
            <Sidebar />
            <div className="ml-[3px] flex w-[1197px] shrink-0 flex-col border border-[#808080] bg-white pt-px">
              <Chart />
              <ScrollBar />
            </div>
            <div className="ml-[3px] flex"><Shortcuts /></div>
            <div className="ml-[2px] flex"><DrawingTools /></div>
          </main>
        </div>
      </div>
    </div>
  );
}
